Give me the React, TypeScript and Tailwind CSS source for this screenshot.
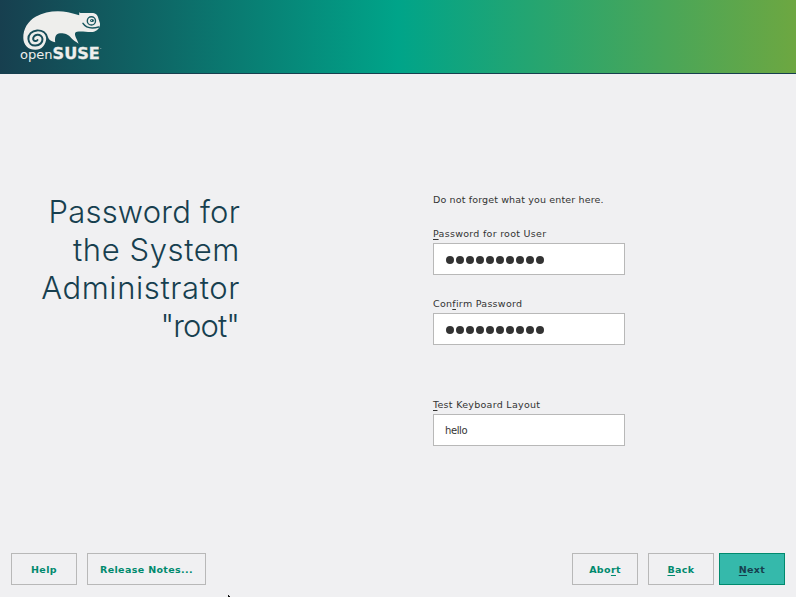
import React from "react";

function Logo() {
  return (
    <svg className="block h-[60px] w-[90px]" viewBox="16 6 90 60" role="img" aria-label="openSUSE">
      <path
        fill="#eeeeec"
        d="M23.3 38C23 29 28 21 36 16.5C45 11.5 57 10 68 12.2C72 13 76 14.5 79.2 15.2L79.2 12.2C80.5 13.2 82 13.1 84 13L93 13C96.5 13.4 98 16 98.7 19.5L100 23.5C100.3 27 98.5 30 94 31.7C89 32.8 82 30.6 77 31.8C72.5 33 76.5 38 78.6 43.8C76 41.8 73 40 71.2 38C68.5 34 64 33 60 33.2C56 33.5 54.5 36.5 55.2 42.3C52.5 42 50 40.5 48.5 38.5C47.5 37 46.5 36.5 46.3 38C46 45 41.5 49.8 35.5 49.8C28 49.8 23.5 45 23.3 38Z"
      />
      <path
        fill="none"
        stroke="#174d59"
        strokeWidth="2"
        strokeLinecap="round"
        d="M47.4 38.2C46.3 32.8 42 30.1 37 30.4C31.8 30.8 28.2 34.5 28.4 39C28.7 43.2 31.7 45.7 35.5 45.5C39.8 45.3 42.7 42.4 42.5 39C42.2 36.2 39.8 34.5 37.3 34.8C34.5 35.1 32.9 37.2 33.2 39.2C33.7 41.3 36.2 41.8 37.5 40"
      />
      <path fill="none" stroke="#17565e" strokeWidth="1.5" strokeLinecap="round" d="M83 23.4C86 28 92 28.8 98.8 27" />
      <circle cx="91.4" cy="20.9" r="4.1" fill="#eeeeec" stroke="#17565e" strokeWidth="1.4" />
      <ellipse cx="92" cy="20.5" rx="2" ry="1.6" fill="#17565e" />
      <circle cx="91.5" cy="20.6" r="0.5" fill="#eeeeec" />
      <text x="20" y="59" fill="#eeeeec" fontFamily="'DejaVu Sans', sans-serif" textLength="79.8" lengthAdjust="spacingAndGlyphs">
        <tspan fontSize="13">open</tspan><tspan fontSize="16" fontWeight="700" stroke="#eeeeec" strokeWidth="0.3">SUSE</tspan>
      </text>
      <circle cx="100.8" cy="48.5" r="0.6" fill="#8cacae" />
    </svg>
  );
}

function Key({ children }: { children: string }) {
  return <span className="underline decoration-1 underline-offset-[2px]">{children}</span>;
}

function Dots() {
  return (
    <div className="flex gap-[2px] pt-[2px]">
      {Array.from({ length: 10 }, (_, i) => (
        <span key={i} className="size-2 rounded-full bg-[#333333]" />
      ))}
    </div>
  );
}

function Field({ label, children, className = "" }: { label: React.ReactNode; children: React.ReactNode; className?: string }) {
  return (
    <div className={className}>
      <div className="h-4 whitespace-nowrap text-[9.5px] leading-4 tracking-[0.28px]">{label}</div>
      <div className="mt-px flex h-8 items-center border border-[#b8b8b8] bg-white pl-3">{children}</div>
    </div>
  );
}

const button =
  "flex h-8 items-center justify-center border border-[#b8b8b8] pt-[3px] text-[9.5px] tracking-[0.36px] font-bold text-[#008a6e] whitespace-nowrap";

export default function App() {
  return (
    <div className="flex h-[597px] w-[796px] flex-col overflow-hidden bg-[#f0f0f2] font-['DejaVu_Sans',sans-serif] text-[10px] text-[#333333]">
      <header className="h-[74px] shrink-0 border-b border-[#173f4f] bg-[linear-gradient(to_right,#173f4f_0%,#00a489_50%,#6da741_100%)] bg-origin-border pl-4 pt-[6px]">
        <Logo />
      </header>
      <main className="flex flex-1">
        <h1 className="w-[240px] pt-[119px] text-right font-['Inter',sans-serif] text-[31px] font-light leading-[38px] text-[#173f4f]">
          <span className="block whitespace-nowrap tracking-[0.2px]">Password for</span>
          <span className="block whitespace-nowrap tracking-[0.6px]">the System</span>
          <span className="block whitespace-nowrap tracking-[0.6px]">Administrator</span>
          <span className="block whitespace-nowrap pr-px tracking-[-0.9px]">"root"</span>
        </h1>
        <form className="ml-[193px] w-48 pt-[118px]">
          <p className="h-4 whitespace-nowrap text-[9.5px] leading-4 tracking-[0.14px]">Do not forget what you enter here.</p>
          <Field className="mt-[18px]" label={<><Key>P</Key>assword for root User</>}><Dots /></Field>
          <Field className="mt-[21px]" label={<>Con<Key>f</Key>irm Password</>}><Dots /></Field>
          <Field className="mt-[52px]" label={<><Key>T</Key>est Keyboard Layout</>}><span className="-ml-px tracking-[-0.4px]">hello</span></Field>
        </form>
      </main>
      <footer className="flex h-11 shrink-0 items-start pl-[11px] pr-[11px]">
        <button className={`${button} w-[66px]`}>Help</button>
        <button className={`${button} ml-[10px] w-[119px]`}>Release Notes...</button>
        <svg className="ml-[21px] mt-[42px] h-[2px] w-1" viewBox="0 0 4 2"><path d="M1 0h1v1h1v1H1z" fill="#111111" /></svg>
        <button className={`${button} ml-auto w-[66px]`}><span>Abo<Key>r</Key>t</span></button>
        <button className={`${button} ml-[10px] w-[66px]`}><span><Key>B</Key>ack</span></button>
        <button className="ml-[5px] flex h-8 w-[66px] items-center justify-center border border-[#008a6e] bg-[#35b9ab] pt-[3px] text-[9.5px] font-bold tracking-[0.36px] text-[#173f4f]"><span><Key>N</Key>ext</span></button>
      </footer>
    </div>
  );
}
